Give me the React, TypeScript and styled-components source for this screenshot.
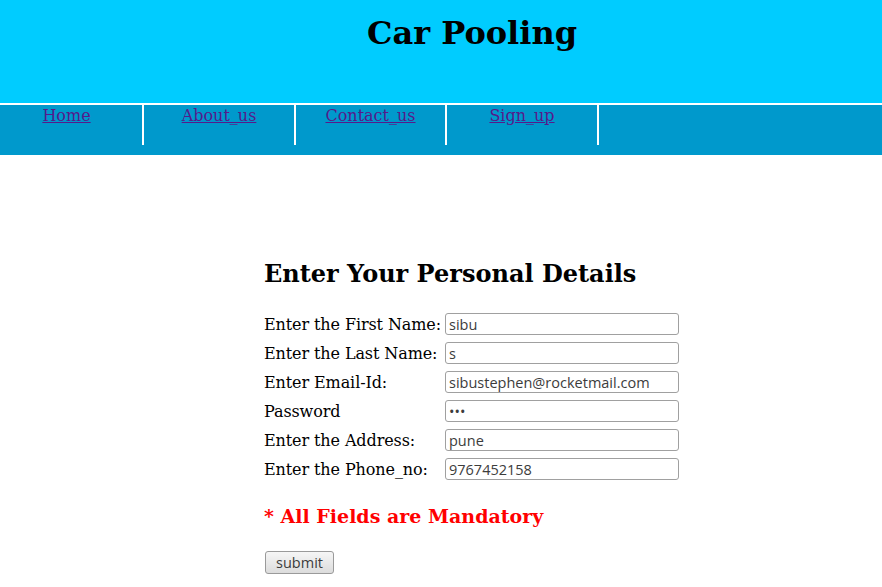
import React from "react";
import styled, { createGlobalStyle } from "styled-components";

const Global = createGlobalStyle`
  html, body { margin: 0; padding: 0; background: #fff; }
  body { font-family: "DejaVu Serif", serif; font-size: 16px; color: #000; }
`;

const Header = styled.header`
  height: 103px;
  background: #00ccff;
  border-bottom: 2px solid #fff;
  display: flex;
  justify-content: center;
  padding-left: 62px;
  box-sizing: content-box;
`;

const Title = styled.h1`
  margin: 14px 0 0;
  font-family: "DejaVu Serif", serif;
  font-weight: bold;
  font-size: 32px;
  line-height: 38px;
`;

const Nav = styled.nav`
  height: 50px;
  background: #0099cc;
  display: flex;
  align-items: flex-start;
`;

const NavItem = styled.div<{ $w: number }>`
  width: ${(p) => p.$w}px;
  height: 40px;
  border-right: 2px solid #fff;
  text-align: center;
  line-height: 20px;
  padding-top: 1px;
  box-sizing: border-box;
  &:first-child { padding-right: 9px; }
`;

const NavLink = styled.a`
  color: #551a8b;
  text-decoration: underline;
  font-size: 16px;
`;

const Main = styled.main`
  padding: 102px 0 0 264px;
`;

const Heading = styled.h2`
  margin: 0 0 22px;
  font-size: 24px;
  line-height: 34px;
  font-weight: bold;
`;

const FormTable = styled.div`
  display: grid;
  grid-template-columns: 181px 234px;
  row-gap: 7px;
`;

const Label = styled.label`
  font-size: 16px;
  line-height: 22px;
  height: 22px;
  padding-top: 1px;
  box-sizing: border-box;
  letter-spacing: -0.1px;
`;

const Input = styled.input`
  width: 234px;
  height: 22px;
  box-sizing: border-box;
  border: 1px solid #a0a0a0;
  border-radius: 3px;
  padding: 1px 3px 0;
  font-family: "Open Sans", "DejaVu Sans", sans-serif;
  font-size: 14.5px;
  color: #3c3c3c;
  background: #fff;
  outline: none;
`;

const Mandatory = styled.p`
  margin: 23px 0 0;
  color: #ff0000;
  font-weight: bold;
  font-size: 19px;
  line-height: 26px;
`;

const Submit = styled.button`
  display: block;
  margin: 22px 0 0 1px;
  width: 69px;
  height: 23px;
  border: 1px solid #9a9a9a;
  border-radius: 3px;
  background: linear-gradient(#f6f6f6, #dcdcdc);
  font-family: "Open Sans", "DejaVu Sans", sans-serif;
  font-size: 14.5px;
  color: #3c3c3c;
  padding: 0;
`;

const navItems: [string, number][] = [
  ["Home", 144],
  ["About_us", 152],
  ["Contact_us", 151],
  ["Sign_up", 152],
];

const fields: [string, string, string][] = [
  ["Enter the First Name:", "text", "sibu"],
  ["Enter the Last Name:", "text", "s"],
  ["Enter Email-Id:", "text", "sibustephen@rocketmail.com"],
  ["Password", "password", "abc"],
  ["Enter the Address:", "text", "pune"],
  ["Enter the Phone_no:", "text", "9767452158"],
];

export default function App() {
  return (
    <>
      <Global />
      <Header>
        <Title>Car Pooling</Title>
      </Header>
      <Nav>
        {navItems.map(([n, w]) => (
          <NavItem key={n} $w={w}>
            <NavLink href="#">{n}</NavLink>
          </NavItem>
        ))}
      </Nav>
      <Main>
        <Heading>Enter Your Personal Details</Heading>
        <FormTable>
          {fields.map(([l, t, v]) => (
            <React.Fragment key={l}>
              <Label>{l}</Label>
              <Input type={t} defaultValue={v} />
            </React.Fragment>
          ))}
        </FormTable>
        <Mandatory>* All Fields are Mandatory</Mandatory>
        <Submit>submit</Submit>
      </Main>
    </>
  );
}
